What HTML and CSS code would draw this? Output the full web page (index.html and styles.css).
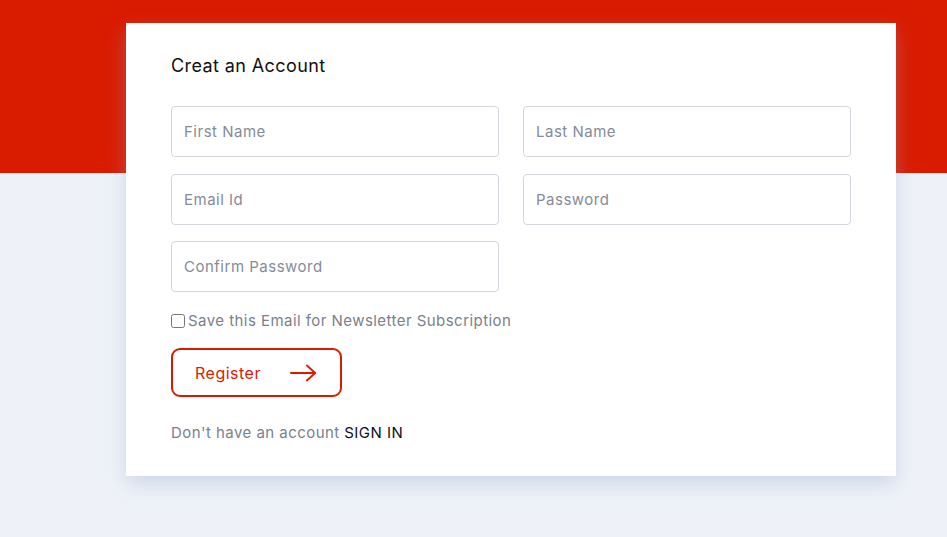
FILE: index.html
```html
<!DOCTYPE html>
<html lang="en">
<head>
<meta charset="utf-8">
<title>Create an Account</title>
<link rel="stylesheet" href="styles.css">
</head>
<body>
<div class="band"></div>
<main class="page">
  <section class="card">
    <h1 class="title">Creat an Account</h1>
    <form class="form">
      <div class="grid">
        <input class="field" type="text" placeholder="First Name">
        <input class="field" type="text" placeholder="Last Name">
        <input class="field" type="email" placeholder="Email Id">
        <input class="field" type="password" placeholder="Password">
        <input class="field" type="password" placeholder="Confirm Password">
      </div>
      <label class="check"><input type="checkbox" class="box"> Save this Email for Newsletter Subscription</label>
      <button type="button" class="btn">Register
        <svg class="arrow" width="30" height="20" viewBox="0 0 30 20"><path d="M1 10H27M18 2L27 10L18 18" fill="none" stroke="#d91c00" stroke-width="2" stroke-linecap="round" stroke-linejoin="round"/></svg>
      </button>
      <p class="alt">Don't have an account <a class="link" href="#">SIGN IN</a></p>
    </form>
  </section>
</main>
</body>
</html>
```
FILE: styles.css
```css
* { box-sizing: border-box; }
html, body { margin: 0; padding: 0; }
body {
  background: #eef2f8;
  font-family: "Inter", "Open Sans", sans-serif;
  min-height: 537px;
  letter-spacing: 0.45px;
}
.band {
  height: 173px;
  background: #d91c00;
}
.page {
  margin-top: -150px;
  padding-left: 126px;
}
.card {
  width: 770px;
  height: 453px;
  background: #fff;
  padding: 31px 45px 0 45px;
  box-shadow: 0 8px 18px rgba(150, 165, 205, 0.35);
}
.title {
  margin: 0;
  font-size: 18px;
  font-weight: 400;
  color: #111;
  line-height: 24px;
  letter-spacing: 0.4px;
}
.form { margin-top: 28px; }
.grid {
  display: grid;
  grid-template-columns: 328px 328px;
  column-gap: 24px;
  row-gap: 16.5px;
}
.field {
  height: 51px;
  border: 1px solid #d3d6dc;
  border-radius: 4px;
  padding: 0 12px;
  font-family: inherit;
  font-size: 15px;
  letter-spacing: 0.5px;
  color: #333;
  outline: none;
}
.field::placeholder { color: #868b98; }
.check {
  display: flex;
  align-items: center;
  gap: 3px;
  margin-top: 19px;
  font-size: 15px;
  color: #7b7f8c;
  line-height: 20px;
}
.box {
  margin: 0;
  width: 14px;
  height: 14px;
}
.btn {
  margin-top: 17px;
  width: 171px;
  height: 49px;
  border: 2px solid #d91c00;
  border-radius: 9px;
  background: #fff;
  color: #d91c00;
  font-family: inherit;
  font-size: 16px;
  letter-spacing: 0.5px;
  display: flex;
  align-items: center;
  padding: 0 22px;
  gap: 29px;
}
.arrow { display: block; }
.alt {
  margin: 26px 0 0;
  font-size: 15px;
  color: #7b7f8c;
  line-height: 20px;
}
.link { color: #0d0f1a; text-decoration: none; }
```
